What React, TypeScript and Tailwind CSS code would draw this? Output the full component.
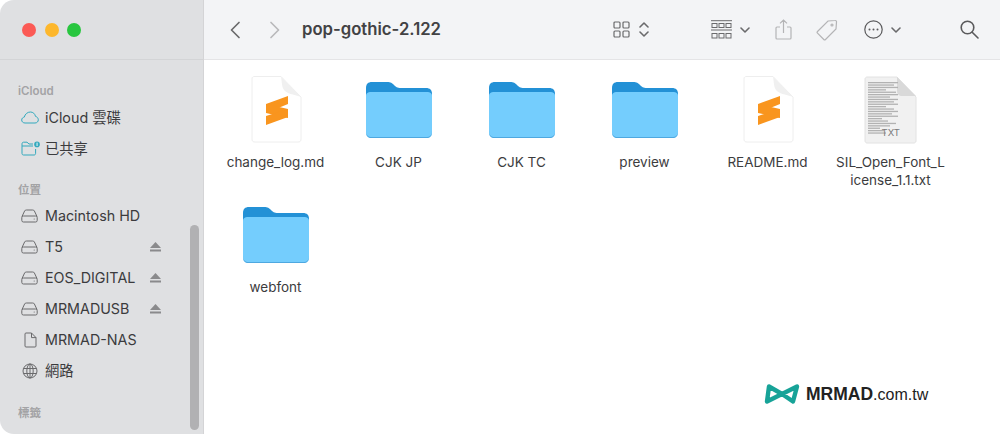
import React from "react";

const font = { fontFamily: '"Inter", "Noto Sans CJK TC", sans-serif' };

const Folder = () => (
  <svg width="68" height="58" viewBox="0 0 68 58">
    <path d="M1 7 C1 3 3 1 7 1 H22 C26 1 27 2 29 4 C31 6 32 7 36 7 H61 C65 7 67 9 67 13 V30 H1 Z" fill="#2391d6" />
    <path d="M1 15 C1 12 3 11 6 11 H62 C65 11 67 12 67 15 V51 C67 55 65 57 61 57 H7 C3 57 1 55 1 51 Z" fill="#74cdfd" />
    <path d="M1 51 C1 55 3 57 7 57 H61 C65 57 67 55 67 51 V50 C67 54 65 56 61 56 H7 C3 56 1 54 1 50 Z" fill="#4ea8e0" />
  </svg>
);

const SublimeDoc = () => (
  <svg width="54" height="68" viewBox="0 0 54 68">
    <path d="M3 3 C3 1 4 .5 6 .5 H32 L52 21 V63 C52 65 51 66 49 66 H6 C4 66 3 65 3 63 Z" fill="#fff" stroke="#eeeeee" strokeWidth="1" />
    <path d="M32 .5 C33 8 33 11 35 14 C38 18 44 18 52 21 Z" fill="#f0f0f0" />
    <path d="M17 28 L39 20 V28 L17 37 Z" fill="#f9951e" />
    <path d="M17 28 L39 33 V42 L17 37 Z" fill="#f9951e" />
    <path d="M17 40 L39 33 V41 L17 49 Z" fill="#f9951e" />
  </svg>
);

const lines = [30, 26, 30, 18, 28, 30, 22, 30, 26, 30, 18, 26, 30, 24, 30, 14, 20, 28, 22, 12, 16, 18];

const TxtDoc = () => (
  <div className="relative w-[54px] h-[68px]">
    <svg width="54" height="68" viewBox="0 0 54 68">
      <path d="M1 3 C1 2 2 1 3 1 H33 L52 21 V65 C52 66 51 67 50 67 H3 C2 67 1 66 1 65 Z" fill="#f1f1f1" stroke="#e2e2e2" strokeWidth="1" />
      <path d="M33 1 V15 C33 18 35 20 38 20 H52 Z" fill="#d9d9d9" />
      {lines.map((w, i) => (
        <rect key={i} x="4" y={6 + i * 2.4} width={w} height="1.3" fill="#b2b2b2" />
      ))}
    </svg>
    <span className="absolute left-[18px] top-[51px] text-[9.5px] leading-[12px] text-[#7a7a7a]">TXT</span>
  </div>
);

const Disk = () => (
  <svg width="17" height="14" viewBox="0 0 17 14" fill="none" stroke="#6a6a6c" strokeWidth="1">
    <path d="M1 7.5 L3.6 2 C4 1.2 4.5 1 5.4 1 H11.6 C12.5 1 13 1.2 13.4 2 L16 7.5" />
    <rect x="0.8" y="7" width="15.4" height="6" rx="1.6" />
    <circle cx="13.2" cy="10" r="0.6" fill="#6a6a6c" stroke="none" />
  </svg>
);

const Eject = () => (
  <svg width="11" height="10" viewBox="0 0 11 10" fill="#8a8a8c">
    <path d="M5.5 0 L11 6 H0 Z" />
    <rect x="0" y="7.5" width="11" height="2" />
  </svg>
);

const Cloud = () => (
  <svg width="18" height="13" viewBox="0 0 18 13" fill="none" stroke="#33a9bd" strokeWidth="1">
    <path d="M4 12 C2 12 .7 10.6 .7 9 C.7 7.4 1.9 6.3 3.3 6.1 C4 3 6.6 1 9.4 1 C12 1 14 2.8 14.5 5.4 C16.2 5.8 17.3 7.2 17.3 8.8 C17.3 10.6 16 12 14 12 Z" />
  </svg>
);

const SharedFolder = () => (
  <svg width="19" height="15" viewBox="0 0 19 15" fill="none" stroke="#33a9bd" strokeWidth="1">
    <path d="M1 3 C1 1.8 1.6 1.2 2.6 1.2 H6 L8 3 H12 M1 3 V12.4 C1 13.4 1.6 14 2.6 14 H13 C14 14 14.6 13.4 14.6 12.4 V8 M1 5 H12" />
    <circle cx="16" cy="3.4" r="2.8" fill="#33a9bd" stroke="none" />
    <rect x="15.6" y="1.6" width="0.9" height="3.4" fill="#fff" stroke="none" />
  </svg>
);

const NasDoc = () => (
  <svg width="13" height="16" viewBox="0 0 13 16" fill="none" stroke="#6a6a6c" strokeWidth="1">
    <path d="M1 2 C1 1.3 1.4 1 2 1 H7.5 L12 5.6 V14 C12 14.7 11.6 15 11 15 H2 C1.4 15 1 14.7 1 14 Z M7.5 1 V5.6 H12" />
  </svg>
);

const Globe = () => (
  <svg width="16" height="16" viewBox="0 0 16 16" fill="none" stroke="#6a6a6c" strokeWidth="1">
    <circle cx="8" cy="8" r="7" />
    <ellipse cx="8" cy="8" rx="3.2" ry="7" />
    <path d="M1.4 5.5 H14.6 M1.4 10.5 H14.6 M8 1 V15" />
  </svg>
);

const SidebarHeading = ({ children, className }: { children: React.ReactNode; className: string }) => (
  <div className={`pl-[18px] h-[16px] flex items-center text-[11.5px] font-semibold text-[#a3a3a5] ${className}`}>{children}</div>
);

const SidebarItem = ({ icon, label, eject }: { icon: React.ReactNode; label: string; eject?: boolean }) => (
  <div className="flex items-center h-[31px] text-[14.3px] text-[#3b3b3d]">
    <div className="w-[45px] shrink-0 pl-[21px] flex items-center">{icon}</div>
    <span className="w-[105px] shrink-0 whitespace-nowrap">{label}</span>
    {eject && <Eject />}
  </div>
);

const files = [
  { name: "change_log.md", icon: <SublimeDoc /> },
  { name: "CJK JP", icon: <Folder /> },
  { name: "CJK TC", icon: <Folder /> },
  { name: "preview", icon: <Folder /> },
  { name: "README.md", icon: <SublimeDoc /> },
  { name: "SIL_Open_Font_L icense_1.1.txt", icon: <TxtDoc /> },
  { name: "webfont", icon: <Folder /> },
];

const App = () => {
  return (
    <div className="relative w-[1000px] h-[434px] overflow-hidden bg-white flex" style={font}>
      {/* Sidebar */}
      <aside className="relative w-[204px] shrink-0 bg-[#dfe0e2] rounded-tl-[14px] rounded-bl-[14px] border-r border-[#d4d4d6]">
        <div className="h-[60px] flex items-center gap-[8.5px] pl-[22px] border-b border-[#d3d4d6]">
          <span className="w-[14px] h-[14px] rounded-full bg-[#fb5a55]" />
          <span className="w-[14px] h-[14px] rounded-full bg-[#fdb72c]" />
          <span className="w-[14px] h-[14px] rounded-full bg-[#28c63f]" />
        </div>
        <SidebarHeading className="mt-[24px]">iCloud</SidebarHeading>
        <div className="mt-[2px]">
          <SidebarItem icon={<Cloud />} label="iCloud 雲碟" />
          <SidebarItem icon={<SharedFolder />} label="已共享" />
        </div>
        <SidebarHeading className="mt-[19px]">位置</SidebarHeading>
        <div className="mt-[1px]">
          <SidebarItem icon={<Disk />} label="Macintosh HD" />
          <SidebarItem icon={<Disk />} label="T5" eject />
          <SidebarItem icon={<Disk />} label="EOS_DIGITAL" eject />
          <SidebarItem icon={<Disk />} label="MRMADUSB" eject />
          <SidebarItem icon={<div className="pl-[3px]"><NasDoc /></div>} label="MRMAD-NAS" />
          <SidebarItem icon={<div className="pl-[1px]"><Globe /></div>} label="網路" />
        </div>
        <SidebarHeading className="mt-[20px]">標籤</SidebarHeading>
        <div className="absolute left-[190px] top-[225px] w-[9px] h-[205px] rounded-full bg-[#b1b1b3]" />
      </aside>

      <main className="flex-1 min-w-0 flex flex-col">
        {/* Toolbar */}
        <header className="h-[60px] shrink-0 bg-[#f3f4f6] border-b border-[#e4e4e6] flex items-center text-[#6b6b6d]">
          <svg className="ml-[25px]" width="12" height="18" viewBox="0 0 12 18" fill="none" stroke="#6a6a6c" strokeWidth="1.7" strokeLinecap="round" strokeLinejoin="round">
            <path d="M10 1.5 L2.5 9 L10 16.5" />
          </svg>
          <svg className="ml-[28px]" width="12" height="18" viewBox="0 0 12 18" fill="none" stroke="#b9b9bb" strokeWidth="1.7" strokeLinecap="round" strokeLinejoin="round">
            <path d="M2 1.5 L9.5 9 L2 16.5" />
          </svg>
          <span className="ml-[21px] w-[311px] text-[16.7px] font-semibold text-[#424244] whitespace-nowrap">pop-gothic-2.122</span>
          <svg width="17" height="17" viewBox="0 0 17 17" fill="none" stroke="#6a6a6c" strokeWidth="1.2">
            <rect x="1" y="1" width="6" height="6" rx="1" />
            <rect x="10" y="1" width="6" height="6" rx="1" />
            <rect x="1" y="10" width="6" height="6" rx="1" />
            <rect x="10" y="10" width="6" height="6" rx="1" />
          </svg>
          <svg className="ml-[9px]" width="10" height="17" viewBox="0 0 10 17" fill="none" stroke="#6a6a6c" strokeWidth="1.6" strokeLinecap="round" strokeLinejoin="round">
            <path d="M1 6 L5 2 L9 6 M1 11 L5 15 L9 11" />
          </svg>
          <svg className="ml-[62px]" width="21" height="20" viewBox="0 0 21 20" fill="none" stroke="#6a6a6c" strokeWidth="1">
            <path d="M0 .7 H21 M0 10 H21" />
            <rect x="1" y="3.5" width="5" height="4" />
            <rect x="8" y="3.5" width="5" height="4" />
            <rect x="15" y="3.5" width="5" height="4" />
            <rect x="1" y="13.5" width="5" height="4.5" />
            <rect x="8" y="13.5" width="5" height="4.5" />
            <rect x="15" y="13.5" width="5" height="4.5" />
          </svg>
          <svg className="ml-[8px]" width="10" height="6" viewBox="0 0 10 6" fill="none" stroke="#6a6a6c" strokeWidth="1.6" strokeLinecap="round" strokeLinejoin="round">
            <path d="M1 1 L5 5 L9 1" />
          </svg>
          <svg className="ml-[25px]" width="17" height="21" viewBox="0 0 17 21" fill="none" stroke="#b4b4b6" strokeWidth="1.2">
            <path d="M5 8 H2 C1.4 8 1 8.4 1 9 V19 C1 19.6 1.4 20 2 20 H15 C15.6 20 16 19.6 16 19 V9 C16 8.4 15.6 8 15 8 H12 M8.5 14 V1 M5 4.4 L8.5 1 L12 4.4" />
          </svg>
          <svg className="ml-[23px]" width="23" height="22" viewBox="0 0 23 22" fill="none" stroke="#b4b4b6" strokeWidth="1.2">
            <path d="M13 2 L20 1.5 C21 1.4 21.6 2 21.5 3 L21 10 L10.5 20.5 C10 21 9.3 21 8.8 20.5 L2.5 14.2 C2 13.7 2 13 2.5 12.5 Z" />
            <circle cx="17" cy="6" r="1" />
          </svg>
          <svg className="ml-[26px]" width="19" height="19" viewBox="0 0 19 19" fill="none" stroke="#5a5a5c" strokeWidth="1.2">
            <circle cx="9.5" cy="9.5" r="8.7" />
            <circle cx="5.5" cy="9.5" r="1" fill="#5a5a5c" stroke="none" />
            <circle cx="9.5" cy="9.5" r="1" fill="#5a5a5c" stroke="none" />
            <circle cx="13.5" cy="9.5" r="1" fill="#5a5a5c" stroke="none" />
          </svg>
          <svg className="ml-[8px]" width="10" height="6" viewBox="0 0 10 6" fill="none" stroke="#6a6a6c" strokeWidth="1.6" strokeLinecap="round" strokeLinejoin="round">
            <path d="M1 1 L5 5 L9 1" />
          </svg>
          <svg className="ml-[59px]" width="19" height="19" viewBox="0 0 19 19" fill="none" stroke="#5a5a5c" strokeWidth="1.6" strokeLinecap="round">
            <circle cx="7.5" cy="7.5" r="6.3" />
            <path d="M12.2 12.2 L18 18" />
          </svg>
        </header>

        {/* File grid */}
        <section className="flex-1 pl-[10px] pt-[16px] grid grid-cols-[repeat(6,123px)] auto-rows-[125px] content-start">
          {files.map((file) => (
            <div key={file.name} className="flex flex-col items-center">
              <div className="h-[68px] flex items-center justify-center">{file.icon}</div>
              <p className="mt-[9px] w-[114px] text-center text-[13.5px] leading-[18px] text-[#3c3c3e] break-words">{file.name}</p>
            </div>
          ))}
        </section>
      </main>

      {/* Watermark */}
      <div className="absolute left-[764px] top-[381px] flex items-center gap-[6px] text-[#222]">
        <svg width="36" height="22" viewBox="0 0 36 22" fill="none">
          <path d="M5 3.5 L18 11 L33 3.5 L29 18.5 L18 11 L3 18.5 Z" stroke="#17a398" strokeWidth="4.4" strokeLinejoin="round" />
        </svg>
        <span className="text-[16px] font-['Liberation_Sans'] whitespace-nowrap">
          <span className="text-[17.5px] font-bold">MRMAD</span>.com.tw
        </span>
      </div>
    </div>
  );
};

export default App;
